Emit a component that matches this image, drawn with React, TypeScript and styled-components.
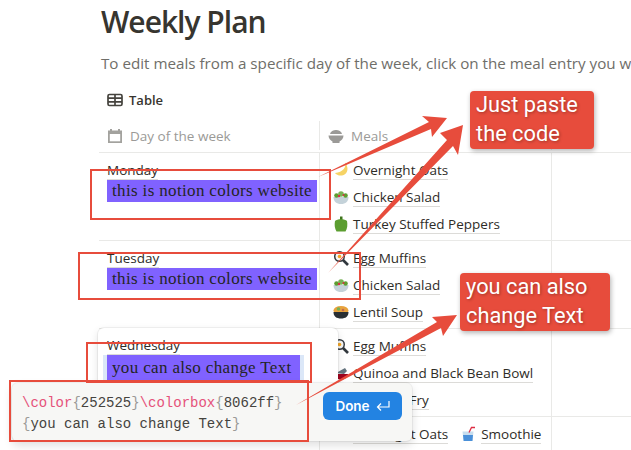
import React from "react";
import styled, { createGlobalStyle } from "styled-components";

const GlobalStyle = createGlobalStyle`
html, body {
  margin: 0;
  padding: 0;
  background: #ffffff;
}
#root {
  width: 631px;
  height: 450px;
  overflow: hidden;
}
`;

const Page = styled.div`
position: relative;
width: 631px;
height: 450px;
overflow: hidden;
padding: 2px 0 0 99px;
box-sizing: border-box;
font-family: "Open Sans", "Noto Sans", sans-serif;
color: #37352f;
`;

const Title = styled.h1`
margin: 0 0 0 2px;
font-size: 30px;
line-height: 40px;
font-weight: 600;
letter-spacing: -1px;
white-space: nowrap;
`;

const Description = styled.p`
margin: 11px 0 0 2px;
font-size: 15.2px;
line-height: 20px;
color: #6f6e69;
white-space: nowrap;
`;

const ViewTab = styled.div`
display: flex;
align-items: center;
gap: 6px;
height: 24px;
margin: 15px 0 0 8px;
font-size: 13px;
font-weight: 600;
color: #37352f;
`;

const HeaderRow = styled.div`
display: grid;
grid-template-columns: 221px 232px 1fr;
height: 32px;
margin-top: 9px;
padding-bottom: 2px;
border-bottom: 1px solid #e9e9e7;
box-sizing: border-box;
`;

const HeaderCell = styled.div`
display: flex;
align-items: center;
gap: 7px;
padding-left: 8px;
font-size: 13.5px;
color: #9b9a97;
border-right: 1px solid #e9e9e7;
`;

const Row = styled.div`
display: grid;
grid-template-columns: 221px 232px 1fr;
height: 88px;
border-bottom: 1px solid #e9e9e7;
box-sizing: border-box;
`;

const DayCell = styled.div`
padding: 8px 0 0 8px;
border-right: 1px solid #e9e9e7;
`;

const MealCell = styled.div`
display: flex;
flex-direction: column;
gap: 5px;
padding: 6px 0 0 13px;
border-right: 1px solid #e9e9e7;
`;

const EmptyCell = styled.div``;

const MealLine = styled.div`
display: flex;
gap: 13px;
`;

const Meal = styled.div`
display: flex;
align-items: center;
gap: 4px;
height: 22px;
font-size: 13.5px;
font-weight: 500;
color: #2e2c27;
white-space: nowrap;
`;

const MealName = styled.span`
line-height: 18px;
border-bottom: 1px solid #dcdbd8;
`;

const DayLine = styled.div`
display: flex;
`;

const DayName = styled.span`
font-size: 13.5px;
line-height: 18px;
font-weight: 500;
color: #2e2c27;
border-bottom: 1px solid #dcdbd8;
`;

const MathBox = styled.div`
width: 210px;
height: 22px;
box-sizing: border-box;
padding-left: 5px;
background: #8062ff;
color: #252525;
font-family: "Liberation Serif", serif;
font-size: 17px;
line-height: 21px;
letter-spacing: 0.35px;
white-space: nowrap;
`;

const Popover = styled.div`
position: absolute;
left: 98px;
top: 328px;
width: 240px;
height: 90px;
box-sizing: border-box;
padding: 8px 0 0 9px;
background: #ffffff;
border-radius: 6px;
box-shadow: 0 0 0 1px rgba(15, 15, 15, 0.05), 0 3px 8px rgba(15, 15, 15, 0.12);
`;

const PopoverMath = styled(MathBox)`
width: 193px;
height: 27px;
padding-top: 2px;
box-shadow: -4px 0 0 #dbe7f8, 4px 0 0 #dbe7f8;
`;

const Editor = styled.div`
position: absolute;
left: 12px;
top: 383px;
width: 400px;
height: 58px;
box-sizing: border-box;
display: flex;
justify-content: space-between;
align-items: flex-start;
padding: 9px 10px 0 10px;
background: #f7f7f5;
border-radius: 6px;
box-shadow: 0 0 0 1px rgba(15, 15, 15, 0.05), 0 4px 10px rgba(15, 15, 15, 0.14);
`;

const Code = styled.div`
padding-top: 1px;
font-family: "Liberation Mono", monospace;
font-size: 14px;
line-height: 21px;
color: #45433e;
white-space: nowrap;
`;

const Keyword = styled.span`
color: #e5527a;
`;

const Brace = styled.span`
color: #9b9a97;
`;

const DoneButton = styled.button`
display: flex;
align-items: center;
justify-content: center;
gap: 6px;
width: 79px;
height: 28px;
padding: 0;
border: 0;
border-radius: 6px;
background: #2383e2;
color: #ffffff;
font-family: "Inter", sans-serif;
font-size: 13.5px;
font-weight: 600;
`;

const Overlay = styled.svg`
position: absolute;
left: 0;
top: 0;
pointer-events: none;
`;

const Callout = styled.div<{ $left: number; $top: number; $width: number }>`
position: absolute;
left: ${(p) => p.$left}px;
top: ${(p) => p.$top}px;
width: ${(p) => p.$width}px;
height: 58px;
box-sizing: border-box;
padding: 0 0 0 6px;
background: #e74c3c;
border-radius: 4px;
box-shadow: 1px 2px 5px rgba(0, 0, 0, 0.3);
color: #ffffff;
font-family: "Roboto", sans-serif;
font-size: 21.8px;
line-height: 29px;
text-shadow: 1px 1px 3px rgba(0, 0, 0, 0.3);
white-space: nowrap;
`;

const CalloutText = styled.div`
margin-top: -1px;
`;

const EmojiBox = styled.svg`
flex: none;
`;

type IconKind = "banana" | "salad" | "pepper" | "egg" | "soup" | "burrito" | "pan" | "drink";

const Emoji: React.FC<{ kind: IconKind }> = ({ kind }) => (
    <EmojiBox width="16" height="16" viewBox="0 0 16 16">
        {kind === "banana" && <path d="M12 0.5c1.5 5-2 9.500-10 10.500 2 3.500 12 4.500 12.500-4 0-2.500-1-5-2.500-6.500z" fill="#f6d365" />}
        {kind === "salad" && (
            <>
                <path d="M0.5 8h15c0 4.500-3 7-7.500 7s-7.500-2.500-7.500-7z" fill="#c4d2d9" />
                <circle cx="3.5" cy="6.5" r="2.3" fill="#5c9e31" />
                <circle cx="8" cy="5" r="2.8" fill="#77b255" />
                <circle cx="12.5" cy="6.5" r="2.3" fill="#5c9e31" />
                <circle cx="6" cy="7" r="1.2" fill="#dd2e44" />
                <circle cx="10.5" cy="6" r="1" fill="#dd2e44" />
            </>
        )}
        {kind === "pepper" && (
            <>
                <path d="M7 4V0.5h2.500V4z" fill="#3e721d" />
                <path d="M2 5c2-2.500 10-2.500 12 0 .8 3.500.2 8-1.500 10.500h-9C1.800 13 1.200 8.500 2 5z" fill="#5c9e31" />
            </>
        )}
        {kind === "egg" && (
            <>
                <circle cx="6.5" cy="6.5" r="5.5" fill="#31373d" />
                <circle cx="6.5" cy="6.5" r="4" fill="#f5f5f5" />
                <circle cx="6.5" cy="6.5" r="1.8" fill="#f4a623" />
                <path d="M10 10l5 5" stroke="#31373d" strokeWidth="2.6" />
            </>
        )}
        {kind === "soup" && (
            <>
                <ellipse cx="8" cy="6.5" rx="7.5" ry="4.5" fill="#e8a33d" />
                <circle cx="5.5" cy="5" r="1.8" fill="#77b255" />
                <circle cx="10" cy="6" r="1.3" fill="#c1694f" />
                <path d="M0.5 8h15c0 4.500-3 6.500-7.500 6.500s-7.500-2-7.500-6.500z" fill="#292f33" />
            </>
        )}
        {kind === "burrito" && (
            <>
                <path d="M1 9h14c0 3-3 5.500-7 5.500s-7-2.500-7-5.500z" fill="#a0041e" />
                <path d="M3 8l9-5 2 3-3 3z" fill="#66757f" />
            </>
        )}
        {kind === "pan" && (
            <>
                <path d="M1 9h14c0 3-3 5-7 5s-7-2-7-5z" fill="#66757f" />
                <circle cx="8" cy="7" r="3" fill="#f4a623" />
            </>
        )}
        {kind === "drink" && (
            <>
                <path d="M1.5 5.5h11l-1 9.500h-9z" fill="#c7ddee" />
                <path d="M2 9h10l-.6 6H2.700z" fill="#4a90d9" />
                <path d="M8 6.5l2.500-5H14" stroke="#dd2e44" strokeWidth="1.3" fill="none" />
            </>
        )}
    </EmojiBox>
);

const TableIcon = () => (
    <svg width="16" height="14" viewBox="0 0 16 14" fill="none" stroke="#45433e" strokeWidth="1.7">
        <rect x="1" y="1.5" width="14" height="11" rx="1.5" />
        <path d="M1 5.2h14M1 8.8h14M8 1.500v11" />
    </svg>
);

const CalendarIcon = () => (
    <svg width="16" height="16" viewBox="0 0 16 16">
        <path d="M3 1h2v1.500h6V1h2v1.500h2V15H1V2.500h2z" fill="#a3a29e" />
        <rect x="2.8" y="6" width="10.4" height="7.3" fill="#fff" />
    </svg>
);

const BowlIcon = () => (
    <svg width="16" height="16" viewBox="0 0 16 16" fill="#9b9a97">
        <path d="M2 6c1-5.500 11-5.500 12 0z" />
        <path d="M0.5 7.500h15c0 3-2 5-4 6v1.500h-7v-1.500c-2-1-4-3-4-6z" />
    </svg>
);

const ReturnIcon = () => (
    <svg width="14" height="12" viewBox="0 0 14 12" fill="none" stroke="#ffffff" strokeWidth="1.2">
        <path d="M13 1v6H1.500M5 3.500L1.500 7 5 10.500" />
    </svg>
);

const Day: React.FC<{ name: string }> = ({ name }) => (
    <DayLine>
        <DayName>{name}</DayName>
    </DayLine>
);

const MealItem: React.FC<{ kind: IconKind; name: string }> = ({ kind, name }) => (
    <Meal>
        <Emoji kind={kind} />
        <MealName>{name}</MealName>
    </Meal>
);

export default function App() {
    return (
        <>
            <GlobalStyle />
            <Page>
                <Title>Weekly Plan</Title>
                <Description>To edit meals from a specific day of the week, click on the meal entry you want to change.</Description>
                <ViewTab>
                    <TableIcon />
                    Table
                </ViewTab>
                <HeaderRow>
                    <HeaderCell>
                        <CalendarIcon />
                        Day of the week
                    </HeaderCell>
                    <HeaderCell>
                        <BowlIcon />
                        Meals
                    </HeaderCell>
                    <EmptyCell />
                </HeaderRow>
                <Row>
                    <DayCell>
                        <Day name="Monday" />
                        <MathBox>this is notion colors website</MathBox>
                    </DayCell>
                    <MealCell>
                        <MealItem kind="banana" name="Overnight Oats" />
                        <MealItem kind="salad" name="Chicken Salad" />
                        <MealItem kind="pepper" name="Turkey Stuffed Peppers" />
                    </MealCell>
                    <EmptyCell />
                </Row>
                <Row>
                    <DayCell>
                        <Day name="Tuesday" />
                        <MathBox>this is notion colors website</MathBox>
                    </DayCell>
                    <MealCell>
                        <MealItem kind="egg" name="Egg Muffins" />
                        <MealItem kind="salad" name="Chicken Salad" />
                        <MealItem kind="soup" name="Lentil Soup" />
                    </MealCell>
                    <EmptyCell />
                </Row>
                <Row>
                    <DayCell />
                    <MealCell>
                        <MealItem kind="egg" name="Egg Muffins" />
                        <MealItem kind="burrito" name="Quinoa and Black Bean Bowl" />
                        <MealItem kind="pan" name="Beef Stir Fry" />
                    </MealCell>
                    <EmptyCell />
                </Row>
                <Row>
                    <DayCell />
                    <MealCell>
                        <MealLine>
                            <MealItem kind="banana" name="Overnight Oats" />
                            <MealItem kind="drink" name="Smoothie" />
                        </MealLine>
                    </MealCell>
                    <EmptyCell />
                </Row>

                <Popover>
                    <Day name="Wednesday" />
                    <PopoverMath>you can also change Text</PopoverMath>
                </Popover>
                <Editor>
                    <Code>
                        <Keyword>\color</Keyword>
                        <Brace>{"{"}</Brace>252525<Brace>{"}"}</Brace>
                        <Keyword>\colorbox</Keyword>
                        <Brace>{"{"}</Brace>8062ff<Brace>{"}"}</Brace>
                        <br />
                        <Brace>{"{"}</Brace>you can also change Text<Brace>{"}"}</Brace>
                    </Code>
                    <DoneButton>
                        Done
                        <ReturnIcon />
                    </DoneButton>
                </Editor>

                <Overlay width="631" height="450" viewBox="0 0 631 450">
                    <g fill="none" stroke="#e74c3c" strokeWidth="2">
                        <rect x="91" y="170" width="239" height="49" />
                        <rect x="79" y="253" width="281" height="46" />
                        <rect x="87" y="343" width="224" height="39" />
                        <rect x="10" y="381" width="298" height="60" />
                    </g>
                    <g fill="#e74c3c">
                        <path d="M318 177L429 122 422 116 447 118 432 137 431 129z" />
                        <path d="M328 273L447 140 440 133 463 125 458 155 453 146z" />
                        <path d="M296 405L437 322 432 317 457 315 443 336 441 328z" />
                    </g>
                </Overlay>
                <Callout $left={470} $top={91} $width={124}>
                    <CalloutText>
                        Just paste
                        <br />
                        the code
                    </CalloutText>
                </Callout>
                <Callout $left={460} $top={273} $width={150}>
                    <CalloutText>
                        you can also
                        <br />
                        change Text
                    </CalloutText>
                </Callout>
            </Page>
        </>
    );
}
